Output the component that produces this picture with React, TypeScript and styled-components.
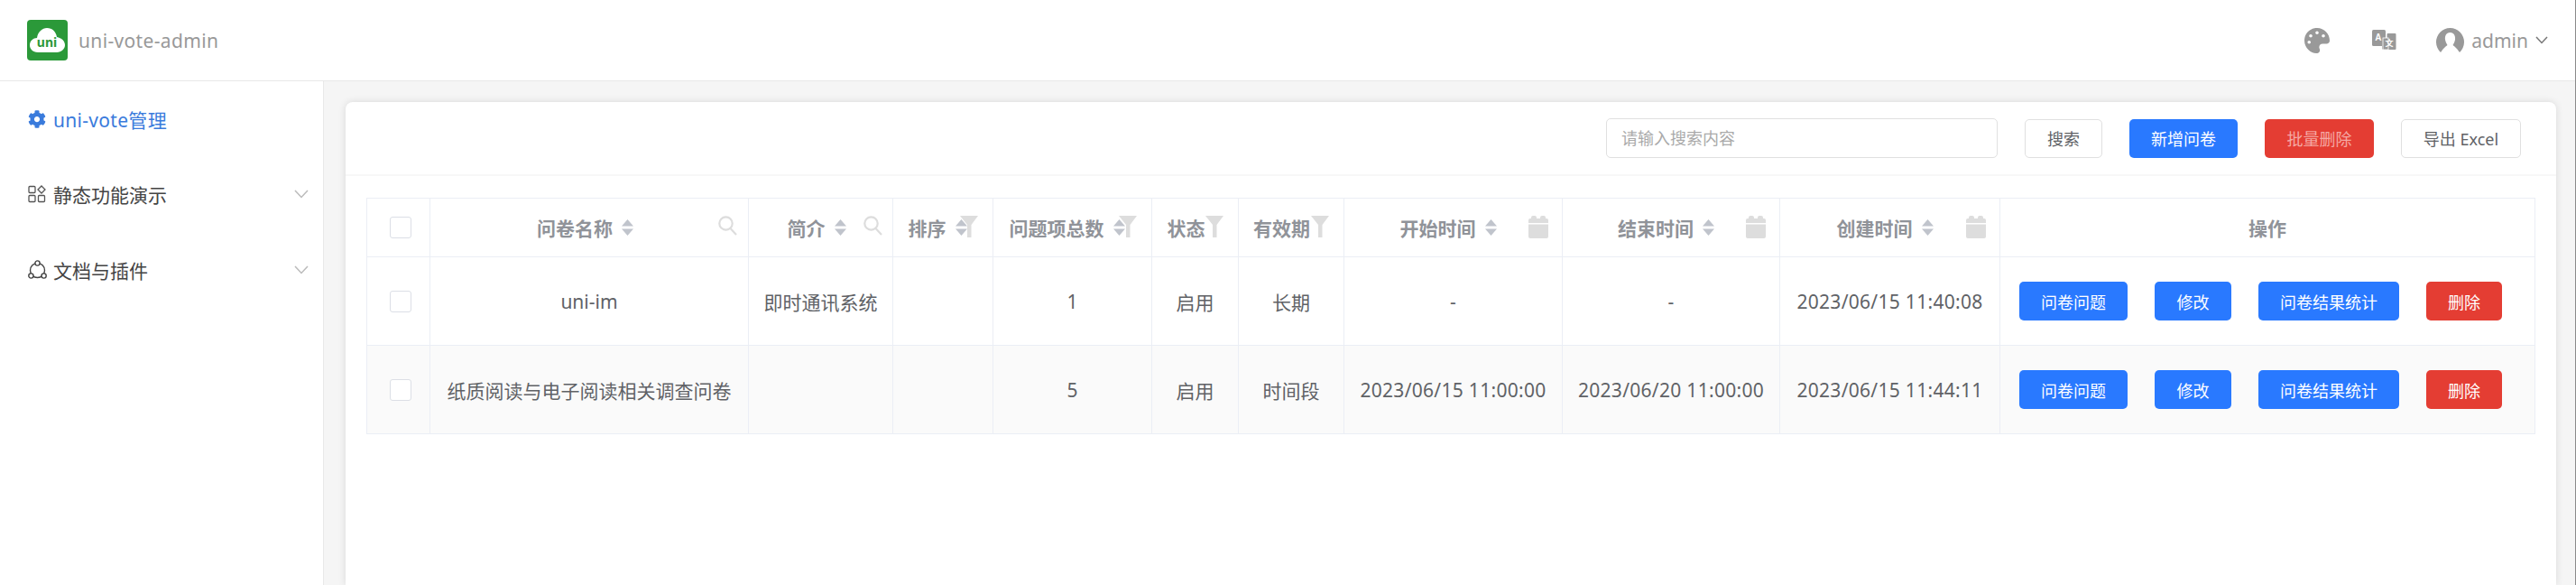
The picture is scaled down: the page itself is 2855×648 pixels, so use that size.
import React from "react";
import styled, { createGlobalStyle } from "styled-components";
import { FaCog, FaPalette } from "react-icons/fa";

const FONT = `"Noto Sans", "Noto Sans CJK SC", sans-serif`;

const GlobalStyle = createGlobalStyle`
  html, body { margin: 0; padding: 0; height: 100%; overflow: hidden; background: #fff; }
  * { box-sizing: border-box; }
  body { font-family: ${FONT}; }
`;

const Page = styled.div`
  width: 2855px;
  height: 648px;
  display: flex;
  flex-direction: column;
  overflow: hidden;
  border-right: 1px solid #8a8a8a;
`;

const TopBar = styled.header`
  flex: none;
  height: 90px;
  display: flex;
  align-items: center;
  padding: 0 30px 0 30px;
  background: #fff;
  border-bottom: 1px solid #e8e8e8;
`;

const Logo = styled.svg`
  width: 45px;
  height: 45px;
  flex: none;
`;

const AppTitle = styled.span`
  margin-left: 12px;
  font-size: 21px;
  letter-spacing: 0.35px;
  color: #999;
`;

const TopActions = styled.div`
  margin-left: auto;
  display: flex;
  align-items: center;
  color: #999;
`;

const TopIcon = styled.span<{ $gap: number }>`
  display: flex;
  margin-right: ${(p) => p.$gap}px;
`;

const UserName = styled.span`
  margin-left: 8px;
  font-size: 21px;
  color: #999;
`;

const UserCaret = styled.svg`
  width: 14px;
  height: 9px;
  margin-left: 8px;
`;

const Body = styled.div`
  flex: 1;
  display: flex;
  min-height: 0;
`;

const Sidebar = styled.nav`
  flex: none;
  width: 359px;
  background: #fff;
  border-right: 1px solid #e8e8e8;
`;

const MenuItem = styled.div<{ $active?: boolean }>`
  height: 83.5px;
  display: flex;
  align-items: center;
  padding: 0 16px 0 31px;
  font-size: 21px;
  letter-spacing: ${(p) => (p.$active ? "0.3px" : "0")};
  color: ${(p) => (p.$active ? "#3a7bdc" : "#444")};
`;

const MenuIcon = styled.span`
  width: 28px;
  display: flex;
  flex: none;
`;

const Chevron = styled.svg`
  margin-left: auto;
  width: 16px;
  height: 10px;
  flex: none;
`;

const Main = styled.main`
  flex: 1;
  min-width: 0;
  padding: 23px 21px 0 24px;
  background: #f5f5f5;
`;

const Card = styled.section`
  height: 100%;
  background: #fff;
  border-radius: 8px 8px 0 0;
  box-shadow: 0 0 8px rgba(0, 0, 0, 0.12);
`;

const Toolbar = styled.div`
  height: 82px;
  display: flex;
  align-items: center;
  justify-content: flex-end;
  gap: 30px;
  padding-right: 39px;
  border-bottom: 2px solid #f7f7f7;
`;

const SearchInput = styled.input`
  width: 434px;
  height: 44px;
  padding: 0 16px;
  border: 1px solid #e0e0e0;
  border-radius: 5px;
  background: #fff;
  font-family: ${FONT};
  font-size: 18px;
  outline: none;
  &::placeholder { color: #aaa; }
`;

const Button = styled.button<{ $kind?: "primary" | "danger" | "plain"; $w: number; $faded?: boolean }>`
  width: ${(p) => p.$w}px;
  height: 43px;
  padding: 0;
  border-radius: 5px;
  font-family: ${FONT};
  font-size: 18px;
  cursor: pointer;
  white-space: nowrap;
  border: ${(p) => (p.$kind === "plain" ? "1px solid #e0e0e0" : "none")};
  background: ${(p) =>
    p.$kind === "primary" ? "#2979ff" : p.$kind === "danger" ? "#e43d33" : "#fff"};
  color: ${(p) => (p.$kind === "plain" ? "#606266" : p.$faded ? "#f5a9a4" : "#fff")};
`;

const TableWrap = styled.div`
  padding: 24px 24px 0 23px;
`;

const Table = styled.table`
  width: 2403px;
  table-layout: fixed;
  border-collapse: collapse;
  border: 1px solid #ebeef5;
`;

const Th = styled.th`
  height: 65px;
  padding: 0;
  position: relative;
  border: 1px solid #ebeef5;
  font-size: 21px;
  font-weight: 700;
  color: #909399;
  background: #fff;
`;

const HeadInner = styled.div<{ $shift: number }>`
  display: flex;
  align-items: center;
  justify-content: center;
  gap: 10px;
  padding-right: ${(p) => p.$shift}px;
`;

const Td = styled.td<{ $date?: boolean }>`
  height: 98px;
  padding: 0;
  border: 1px solid #ebeef5;
  text-align: center;
  font-size: 21px;
  letter-spacing: ${(p) => (p.$date ? "0.3px" : "0")};
  color: #606266;
  white-space: nowrap;
`;

const Tr = styled.tr<{ $striped?: boolean }>`
  background: ${(p) => (p.$striped ? "#fafafa" : "#fff")};
`;

const Check = styled.span`
  display: block;
  width: 24px;
  height: 24px;
  margin-left: 25px;
  border: 1px solid #dcdfe6;
  border-radius: 3px;
  background: #fff;
`;

const Actions = styled.div`
  display: flex;
  gap: 30px;
  padding-left: 21px;
`;

const CornerIcon = styled.span<{ $right: number }>`
  position: absolute;
  top: 19px;
  right: ${(p) => p.$right}px;
  display: flex;
`;

const SortIcon = () => (
  <svg width="13" height="18" viewBox="0 0 13 18">
    <path d="M6.5 0 L13 7.5 H0 Z M6.5 18 L13 10.5 H0 Z" fill="#c0c4cc" />
  </svg>
);

const SearchIcon = () => (
  <svg width="21" height="22" viewBox="0 0 21 22" fill="none" stroke="#ddd" strokeWidth="2.2">
    <circle cx="8.5" cy="8.5" r="7.2" />
    <path d="M13.5 14 L20 21" />
  </svg>
);

const FunnelIcon = () => (
  <svg width="20" height="24" viewBox="0 0 20 24">
    <path d="M0 0 H20 L12.5 10 V24 H8 V10 Z" fill="#ddd" />
  </svg>
);

const CalendarIcon = () => (
  <svg width="22" height="25" viewBox="0 0 22 25">
    <path d="M3 2 Q3 0 5 0 H7 Q9 0 9 2 V3 H13 V2 Q13 0 15 0 H17 Q19 0 19 2 V3 H20 Q22 3 22 5 V8 H0 V5 Q0 3 2 3 H3 Z" fill="#ddd" />
    <path d="M0 9.5 H22 V23 Q22 25 20 25 H2 Q0 25 0 23 Z" fill="#ddd" />
  </svg>
);

const AppsIcon = () => (
  <svg width="20" height="20" viewBox="0 0 20 20" fill="none" stroke="#555" strokeWidth="1.3">
    <rect x="1" y="1.5" width="7" height="7" rx="1" />
    <rect x="1" y="11.5" width="7" height="7" rx="1" />
    <rect x="11.5" y="11.5" width="7" height="7" rx="1" />
    <path d="M15 1 L19 5 L15 9 L11 5 Z" />
  </svg>
);

const PluginIcon = () => (
  <svg width="21" height="22" viewBox="0 0 21 22" fill="none" stroke="#444" strokeWidth="1.4">
    <circle cx="10.5" cy="11.5" r="8" />
    <circle cx="10.5" cy="3.5" r="2.6" fill="#fff" />
    <circle cx="3.4" cy="17.5" r="2.6" fill="#fff" />
    <circle cx="17.6" cy="17.5" r="2.6" fill="#fff" />
  </svg>
);

const TranslateIcon = () => (
  <svg width="27" height="23" viewBox="0 0 27 23">
    <rect x="0" y="0" width="15" height="18" rx="1.5" fill="#999" />
    <path d="M11 18 H15 L11 22 Z" fill="#999" />
    <rect x="16.5" y="4" width="10" height="18" rx="1" fill="#999" />
    <rect x="12" y="9" width="6" height="13" fill="#999" stroke="#fff" strokeWidth="0.8" />
    <text x="3.2" y="12" fontSize="10" fontWeight="700" fill="#fff" fontFamily="Liberation Sans, sans-serif">A</text>
    <text x="14.5" y="18" fontSize="9" fontWeight="700" fill="#fff" fontFamily="Noto Sans CJK SC, sans-serif">文</text>
  </svg>
);

const AvatarIcon = () => (
  <svg width="31" height="28" viewBox="0 0 31 28">
    <path d="M5 27 A15.5 15.5 0 1 1 26 27 L20 22 H11 Z" fill="#999" />
    <path d="M15.5 5 C11 5 9.5 9 10 13 C10.5 16 12 18 12.5 19 C10 21 7 23 5 28 H26 C24 23 21 21 18.5 19 C19 18 20.5 16 21 13 C21.5 9 20 5 15.5 5 Z" fill="#fff" />
  </svg>
);

const DownIcon = () => (
  <Chevron viewBox="0 0 16 10" fill="none" stroke="#bbb" strokeWidth="1.5">
    <path d="M1 1 L8 8.5 L15 1" />
  </Chevron>
);

const columns = [
  { w: 70 },
  { w: 353, title: "问卷名称", sort: true, corner: "search", right: 12, shift: 9 },
  { w: 160, title: "简介", sort: true, corner: "search", right: 11, shift: 9 },
  { w: 111, title: "排序", sort: true, corner: "funnel", right: 16, shift: 12 },
  { w: 176, title: "问题项总数", sort: true, corner: "funnel", right: 16, shift: 12 },
  { w: 96, title: "状态", corner: "funnel", right: 16, shift: 20 },
  { w: 117, title: "有效期", corner: "funnel", right: 16, shift: 21 },
  { w: 242, title: "开始时间", sort: true, corner: "date", right: 15, shift: 11 },
  { w: 241, title: "结束时间", sort: true, corner: "date", right: 15, shift: 11 },
  { w: 244, title: "创建时间", sort: true, corner: "date", right: 15, shift: 11 },
  { w: 593, title: "操作", shift: 0 },
];

const rows = [
  { name: "uni-im", intro: "即时通讯系统", count: 1, state: "启用", period: "长期", start: "-", end: "-", created: "2023/06/15 11:40:08" },
  { name: "纸质阅读与电子阅读相关调查问卷", intro: "", count: 5, state: "启用", period: "时间段", start: "2023/06/15 11:00:00", end: "2023/06/20 11:00:00", created: "2023/06/15 11:44:11" },
];

export default function App() {
  return (
    <Page>
      <GlobalStyle />
      <TopBar>
        <Logo viewBox="0 0 45 45">
          <rect width="45" height="45" rx="4" fill="#2b9939" />
          <path d="M12 36 C6 36 3 32 3 28 C3 23 7 20 11 20 C12 13 17 9 22 9 C28 9 32 13 33 19 C38 20 42 23 42 28 C42 32 38 36 33 36 Z" fill="#fff" />
          <text x="22" y="30" textAnchor="middle" fontSize="14" fontWeight="700" fill="#2b9939" fontFamily="Noto Sans, sans-serif">uni</text>
        </Logo>
        <AppTitle>uni-vote-admin</AppTitle>
        <TopActions>
          <TopIcon $gap={47}><FaPalette size={28} color="#999" /></TopIcon>
          <TopIcon $gap={44}><TranslateIcon /></TopIcon>
          <AvatarIcon />
          <UserName>admin</UserName>
          <UserCaret viewBox="0 0 14 9" fill="none" stroke="#777" strokeWidth="1.5">
            <path d="M1 1 L7 7.5 L13 1" />
          </UserCaret>
        </TopActions>
      </TopBar>
      <Body>
        <Sidebar>
          <MenuItem $active>
            <MenuIcon><FaCog size={20} color="#3a7bdc" /></MenuIcon>
            uni-vote管理
          </MenuItem>
          <MenuItem>
            <MenuIcon><AppsIcon /></MenuIcon>
            静态功能演示
            <DownIcon />
          </MenuItem>
          <MenuItem>
            <MenuIcon><PluginIcon /></MenuIcon>
            文档与插件
            <DownIcon />
          </MenuItem>
        </Sidebar>
        <Main>
          <Card>
            <Toolbar>
              <SearchInput placeholder="请输入搜索内容" />
              <Button $kind="plain" $w={86}>搜索</Button>
              <Button $kind="primary" $w={120}>新增问卷</Button>
              <Button $kind="danger" $w={121} $faded>批量删除</Button>
              <Button $kind="plain" $w={133}>导出 Excel</Button>
            </Toolbar>
            <TableWrap>
              <Table>
                <colgroup>
                  {columns.map((c, i) => (
                    <col key={i} style={{ width: c.w }} />
                  ))}
                </colgroup>
                <thead>
                  <tr>
                    {columns.map((c, i) => (
                      <Th key={i}>
                        {c.title ? (
                          <HeadInner $shift={c.shift ?? 0}>
                            {c.title}
                            {c.sort && <SortIcon />}
                          </HeadInner>
                        ) : (
                          <Check />
                        )}
                        {c.corner && (
                          <CornerIcon $right={c.right ?? 0}>
                            {c.corner === "search" && <SearchIcon />}
                            {c.corner === "funnel" && <FunnelIcon />}
                            {c.corner === "date" && <CalendarIcon />}
                          </CornerIcon>
                        )}
                      </Th>
                    ))}
                  </tr>
                </thead>
                <tbody>
                  {rows.map((r, i) => (
                    <Tr key={r.name} $striped={i === 1}>
                      <Td><Check /></Td>
                      <Td>{r.name}</Td>
                      <Td>{r.intro}</Td>
                      <Td />
                      <Td>{r.count}</Td>
                      <Td>{r.state}</Td>
                      <Td>{r.period}</Td>
                      <Td $date>{r.start}</Td>
                      <Td $date>{r.end}</Td>
                      <Td $date>{r.created}</Td>
                      <Td>
                        <Actions>
                          <Button $kind="primary" $w={120}>问卷问题</Button>
                          <Button $kind="primary" $w={85}>修改</Button>
                          <Button $kind="primary" $w={156}>问卷结果统计</Button>
                          <Button $kind="danger" $w={84}>删除</Button>
                        </Actions>
                      </Td>
                    </Tr>
                  ))}
                </tbody>
              </Table>
            </TableWrap>
          </Card>
        </Main>
      </Body>
    </Page>
  );
}
